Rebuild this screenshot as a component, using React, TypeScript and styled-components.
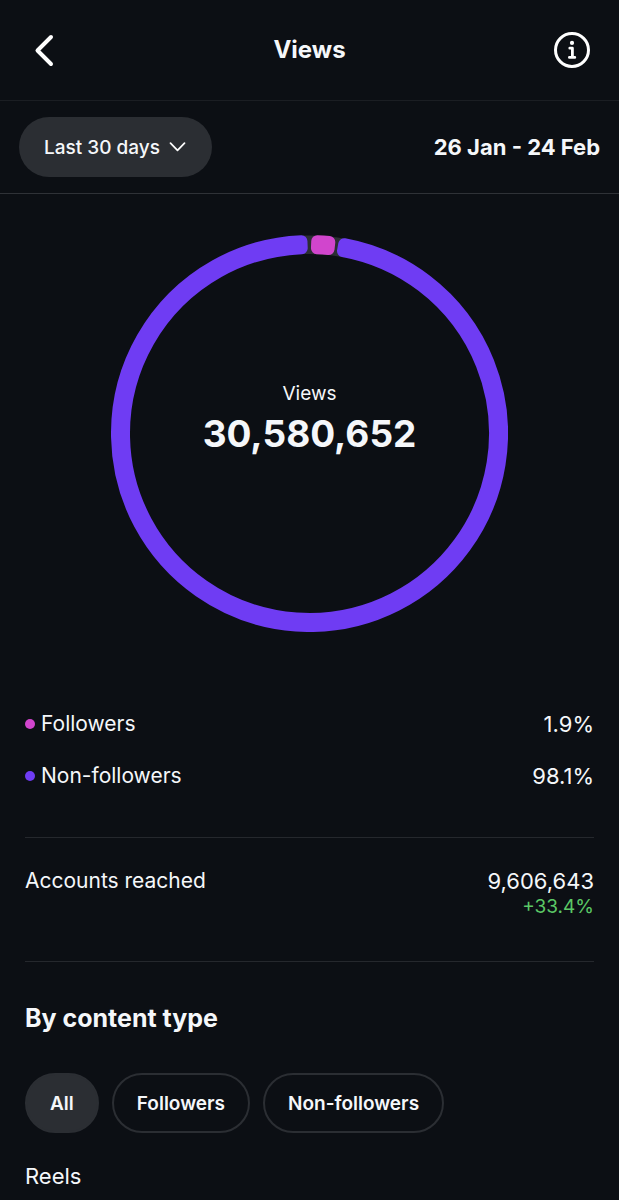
import React, { useState } from "react";
import styled, { createGlobalStyle } from "styled-components";

const colors = {
  page: "#0c0f14",
  text: "#f5f7fa",
  pill: "#2b2e33",
  line: "#25282d",
  faintLine: "#1b1e23",
  pink: "#d145cd",
  purple: "#6f3cf3",
  green: "#5bc866",
};

const GlobalStyle = createGlobalStyle`
  *, *::before, *::after { box-sizing: border-box; }
  body {
    margin: 0;
    background: ${colors.page};
    color: ${colors.text};
    font-family: Inter, "Liberation Sans", sans-serif;
  }
  button, select { font-family: inherit; color: inherit; }
`;

const Page = styled.div`
  min-height: 100vh;
  display: flex;
  flex-direction: column;
`;

const Header = styled.header`
  display: grid;
  grid-template-columns: 1fr auto 1fr;
  align-items: center;
  padding: 32px 25px;
  border-bottom: 1px solid ${colors.faintLine};
`;

const Title = styled.h1`
  margin: 0;
  font-size: 24px;
  line-height: 36px;
  font-weight: 700;
`;

const IconButton = styled.button<{ $end?: boolean }>`
  display: flex;
  justify-self: ${(p) => (p.$end ? "end" : "start")};
  padding: 0;
  border: 0;
  background: none;
  cursor: pointer;
`;

const RangeBar = styled.div`
  display: flex;
  align-items: center;
  justify-content: space-between;
  padding: 16px 19px;
  border-bottom: 1px solid #2f3237;
`;

const SelectWrap = styled.div`
  position: relative;
  display: flex;
  align-items: center;
`;

const RangeSelect = styled.select`
  appearance: none;
  height: 60px;
  padding: 0 52px 0 25px;
  border: 0;
  border-radius: 30px;
  background: ${colors.pill};
  font-size: 19px;
  font-weight: 500;
`;

const SelectArrow = styled.svg`
  position: absolute;
  right: 26px;
  pointer-events: none;
`;

const RangeDates = styled.span`
  font-size: 22px;
  line-height: 28px;
  font-weight: 700;
`;

const Content = styled.main`
  padding: 41px 25px 10px;
`;

const Chart = styled.figure`
  display: grid;
  justify-items: center;
  align-items: center;
  margin: 0 0 78px;
  > * { grid-area: 1 / 1; }
`;

const Ring = styled.svg`
  display: block;
  width: 397px;
  max-width: 100%;
  height: auto;
`;

const Total = styled.figcaption`
  display: flex;
  flex-direction: column;
  align-items: center;
  padding-bottom: 28px;
`;

const TotalLabel = styled.span`
  font-size: 19px;
  line-height: 28px;
`;

const TotalValue = styled.strong`
  font-size: 37px;
  line-height: 52px;
  font-weight: 700;
`;

const Legend = styled.dl`
  display: flex;
  flex-direction: column;
  gap: 24px;
  margin: 0;
`;

const Row = styled.div`
  display: flex;
  justify-content: space-between;
  font-size: 22px;
  line-height: 28px;
`;

const Label = styled.dt`
  display: flex;
  align-items: center;
  align-self: flex-start;
  gap: 6px;
  font-size: 21px;
`;

const Dot = styled.span<{ $color: string }>`
  width: 10px;
  height: 10px;
  border-radius: 50%;
  background: ${(p) => p.$color};
`;

const Value = styled.dd`
  margin: 0;
  text-align: right;
`;

const Delta = styled.span`
  display: block;
  font-size: 19px;
  line-height: 24px;
  color: ${colors.green};
`;

const Reached = styled.dl`
  margin: 47px 0 41px;
  padding: 29px 0 42px;
  border: solid ${colors.line};
  border-width: 1px 0;
`;

const SectionTitle = styled.h2`
  margin: 0 0 40px;
  font-size: 25px;
  line-height: 30px;
  font-weight: 700;
`;

const Chips = styled.div`
  display: flex;
  flex-wrap: wrap;
  gap: 13px;
  margin-bottom: 29px;
`;

const Chip = styled.button<{ $active: boolean }>`
  height: 60px;
  padding: 0 23px;
  border: 2px solid ${colors.pill};
  border-radius: 30px;
  background: ${(p) => (p.$active ? colors.pill : "transparent")};
  font-size: 19px;
  font-weight: 600;
  cursor: pointer;
`;

const point = (radius: number, degrees: number) => {
  const a = (degrees * Math.PI) / 180;
  return `${198.5 + radius * Math.sin(a)} ${198.5 - radius * Math.cos(a)}`;
};

// Outline of a ring slice; degrees run clockwise from twelve o'clock.
const slice = (outer: number, inner: number, from: number, to: number) => {
  const large = to - from > 180 ? 1 : 0;
  return `M${point(outer, from)} A${outer} ${outer} 0 ${large} 1 ${point(outer, to)} L${point(inner, to)} A${inner} ${inner} 0 ${large} 0 ${point(inner, from)} Z`;
};

const slices = [
  { color: colors.pink, from: 2.3, to: 5.9 },
  { color: colors.purple, from: 10.4, to: 357.6 },
];

const legend = [
  { label: "Followers", value: "1.9%", color: colors.pink },
  { label: "Non-followers", value: "98.1%", color: colors.purple },
];

const filters = ["All", "Followers", "Non-followers"];

export default function App() {
  const [filter, setFilter] = useState("All");

  return (
    <Page>
      <GlobalStyle />
      <Header>
        <IconButton aria-label="Back">
          <svg width="38" height="36" viewBox="0 0 38 36" fill="none" stroke="#fff" strokeWidth="4" strokeLinecap="round" strokeLinejoin="round">
            <path d="M26 5 L12.5 18.5 L26 32" />
          </svg>
        </IconButton>
        <Title>Views</Title>
        <IconButton $end aria-label="About views">
          <svg width="44" height="36" viewBox="0 0 44 36" fill="none" stroke="#fff">
            <circle cx="22" cy="18" r="16.5" strokeWidth="3" />
            <circle cx="22" cy="10.9" r="2.1" fill="#fff" stroke="none" />
            <path d="M19.8 16.2h2.6v9M19.4 25.4h5.4" strokeWidth="2.8" strokeLinecap="round" strokeLinejoin="round" />
          </svg>
        </IconButton>
      </Header>

      <RangeBar>
        <SelectWrap>
          <RangeSelect aria-label="Date range" defaultValue="30">
            <option value="30">Last 30 days</option>
          </RangeSelect>
          <SelectArrow width="17" height="10" viewBox="0 0 17 10" fill="none" stroke="#fff" strokeWidth="1.7" strokeLinecap="round" strokeLinejoin="round">
            <path d="M1.5 1.2 L8.5 8.4 L15.5 1.2" />
          </SelectArrow>
        </SelectWrap>
        <RangeDates>26 Jan - 24 Feb</RangeDates>
      </RangeBar>

      <Content>
        <Chart>
          <Ring viewBox="0 0 397 397" aria-hidden="true">
            <path d={slice(198, 179.5, -2, 11)} fill={colors.pill} />
            {slices.map((s) => (
              <path
                key={s.color}
                d={slice(192.5, 185.5, s.from, s.to)}
                fill={s.color}
                stroke={s.color}
                strokeWidth="12"
                strokeLinejoin="round"
              />
            ))}
          </Ring>
          <Total>
            <TotalLabel>Views</TotalLabel>
            <TotalValue>30,580,652</TotalValue>
          </Total>
        </Chart>

        <Legend>
          {legend.map((item) => (
            <Row key={item.label}>
              <Label>
                <Dot $color={item.color} />
                {item.label}
              </Label>
              <Value>{item.value}</Value>
            </Row>
          ))}
        </Legend>

        <Reached>
          <Row>
            <Label>Accounts reached</Label>
            <Value>
              9,606,643
              <Delta>+33.4%</Delta>
            </Value>
          </Row>
        </Reached>

        <SectionTitle>By content type</SectionTitle>
        <Chips>
          {filters.map((name) => (
            <Chip key={name} $active={filter === name} aria-pressed={filter === name} onClick={() => setFilter(name)}>
              {name}
            </Chip>
          ))}
        </Chips>
        <Row>Reels</Row>
      </Content>
    </Page>
  );
}
